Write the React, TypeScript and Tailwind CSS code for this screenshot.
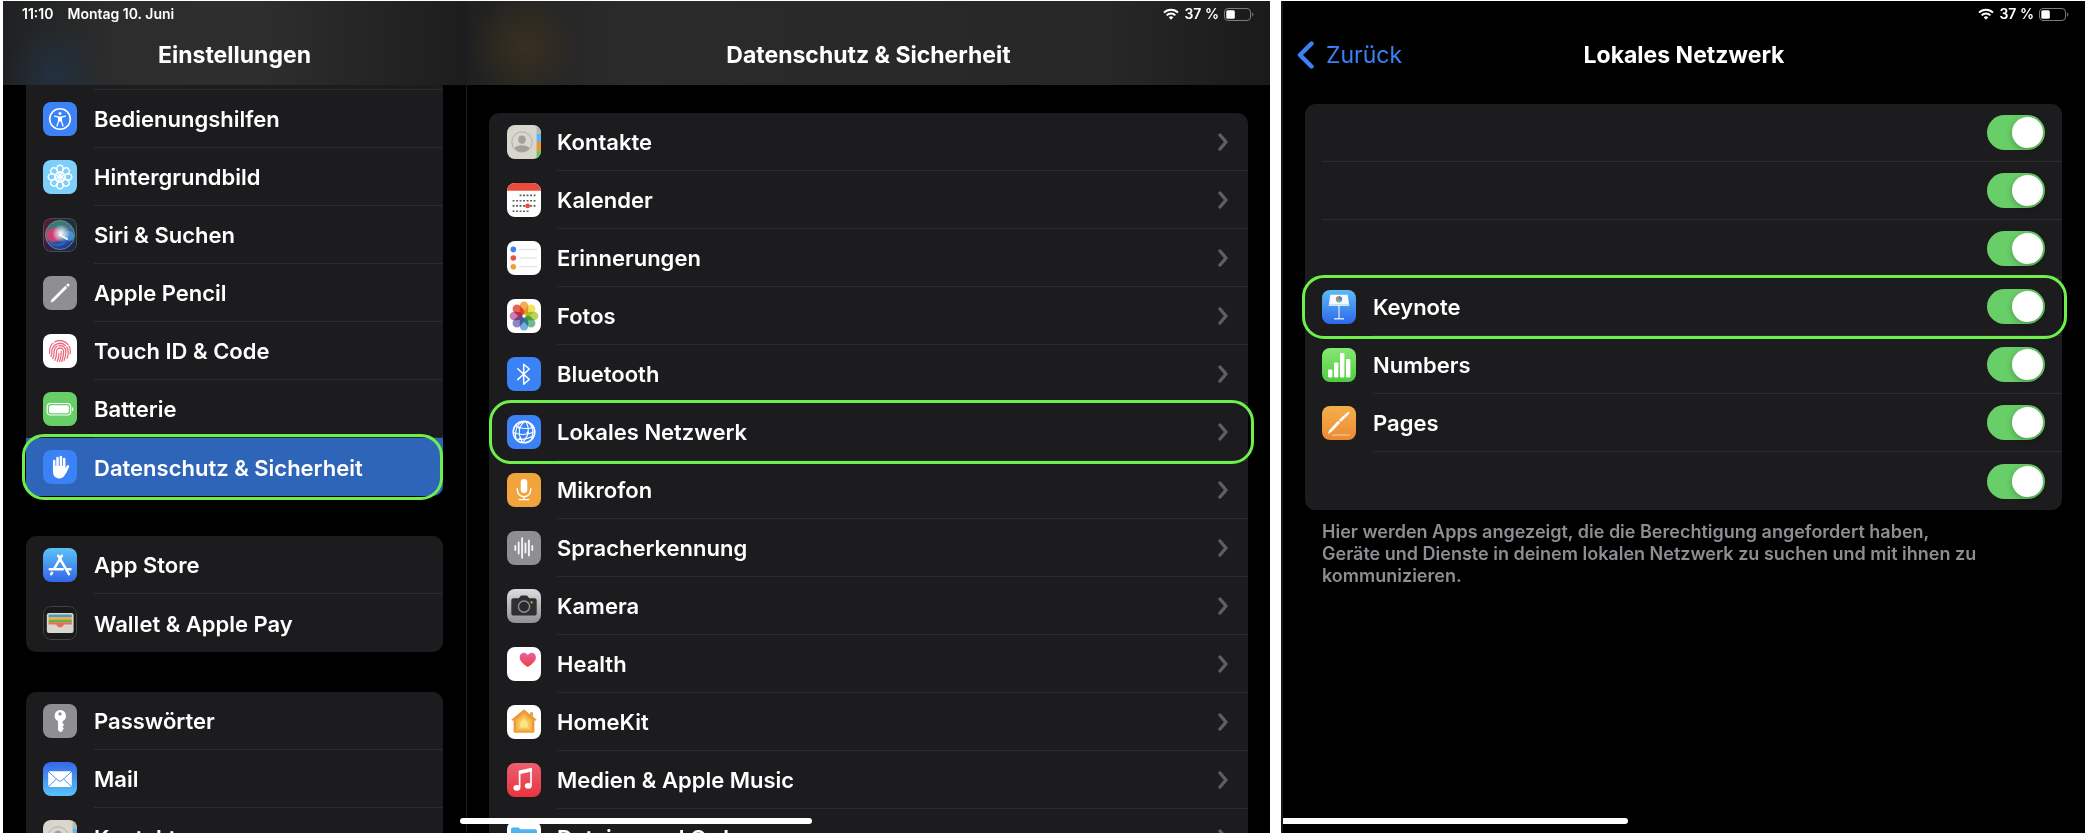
import React from 'react';

type IconName =
  | 'accessibility' | 'wallpaper' | 'siri' | 'pencil' | 'touchid' | 'battery' | 'hand'
  | 'appstore' | 'wallet' | 'key' | 'mail' | 'contacts' | 'calendar' | 'reminders'
  | 'photos' | 'bluetooth' | 'globe' | 'mic' | 'speech' | 'camera' | 'health' | 'home'
  | 'music' | 'files' | 'keynote' | 'numbers' | 'pages';

type Item = { label: string; icon: IconName; active?: boolean };

const sidebarGroups: Item[][] = [
  [
    { label: 'Bedienungshilfen', icon: 'accessibility' },
    { label: 'Hintergrundbild', icon: 'wallpaper' },
    { label: 'Siri & Suchen', icon: 'siri' },
    { label: 'Apple Pencil', icon: 'pencil' },
    { label: 'Touch ID & Code', icon: 'touchid' },
    { label: 'Batterie', icon: 'battery' },
    { label: 'Datenschutz & Sicherheit', icon: 'hand', active: true },
  ],
  [
    { label: 'App Store', icon: 'appstore' },
    { label: 'Wallet & Apple Pay', icon: 'wallet' },
  ],
  [
    { label: 'Passwörter', icon: 'key' },
    { label: 'Mail', icon: 'mail' },
    { label: 'Kontakte', icon: 'contacts' },
  ],
];

const privacyItems: Item[] = [
  { label: 'Kontakte', icon: 'contacts' },
  { label: 'Kalender', icon: 'calendar' },
  { label: 'Erinnerungen', icon: 'reminders' },
  { label: 'Fotos', icon: 'photos' },
  { label: 'Bluetooth', icon: 'bluetooth' },
  { label: 'Lokales Netzwerk', icon: 'globe', active: true },
  { label: 'Mikrofon', icon: 'mic' },
  { label: 'Spracherkennung', icon: 'speech' },
  { label: 'Kamera', icon: 'camera' },
  { label: 'Health', icon: 'health' },
  { label: 'HomeKit', icon: 'home' },
  { label: 'Medien & Apple Music', icon: 'music' },
  { label: 'Dateien und Ordner', icon: 'files' },
];

const networkApps: { label?: string; icon?: IconName; active?: boolean }[] = [
  {},
  {},
  {},
  { label: 'Keynote', icon: 'keynote', active: true },
  { label: 'Numbers', icon: 'numbers' },
  { label: 'Pages', icon: 'pages' },
  {},
];

const petals = ['#f29d38', '#f1e03a', '#a9cf46', '#55b07f', '#5f9fd8', '#7c6fb8', '#c16aa8', '#e5493f'];

const glyphs: Record<IconName, React.ReactNode> = {
  accessibility: (
    <>
      <rect width="34" height="34" fill="#3b82f7" />
      <circle cx="17" cy="17" r="10.3" fill="none" stroke="#fff" strokeWidth="1.6" />
      <circle cx="17" cy="11.6" r="1.5" fill="#fff" />
      <path d="M11.6 14.2l4 .9v4L14 24M22.4 14.2l-4 .9v4L20 24" fill="none" stroke="#fff" strokeWidth="1.3" strokeLinecap="round" strokeLinejoin="round" />
      <path d="M15.2 14.6h3.6v5h-3.6z" fill="#fff" />
    </>
  ),
  wallpaper: (
    <>
      <rect width="34" height="34" fill="#7fcffb" />
      <g fill="none" stroke="#fff" strokeWidth="1.5">
        {petals.map((p, i) => (
          <g key={p} transform={`rotate(${i * 45} 17 17)`}>
            <ellipse cx="17" cy="8.8" rx="3.2" ry="3.6" />
            <ellipse cx="17" cy="14" rx="1.3" ry="2.4" strokeWidth="1" />
          </g>
        ))}
      </g>
    </>
  ),
  siri: (
    <>
      <defs>
        <linearGradient id="siriBg" x1="0" y1="0" x2="1" y2="0">
          <stop offset="0" stopColor="#6a132c" />
          <stop offset=".5" stopColor="#23313a" />
          <stop offset="1" stopColor="#16343f" />
        </linearGradient>
        <linearGradient id="siriOrb" x1="0" y1="0" x2=".3" y2="1">
          <stop offset="0" stopColor="#2f7f63" />
          <stop offset=".5" stopColor="#4b6f8c" />
          <stop offset="1" stopColor="#1d3f96" />
        </linearGradient>
        <radialGradient id="siriGlow">
          <stop offset="0" stopColor="#fff" />
          <stop offset=".35" stopColor="#e6f3f4" stopOpacity=".75" />
          <stop offset="1" stopColor="#fff" stopOpacity="0" />
        </radialGradient>
      </defs>
      <rect width="34" height="34" fill="url(#siriBg)" />
      <path d="M0 24h34v10H0z" fill="#241c52" opacity=".6" />
      <circle cx="17" cy="17" r="14.5" fill="url(#siriOrb)" stroke="#6f9c94" strokeWidth=".8" />
      <circle cx="10.5" cy="17" r="7" fill="#e0386c" opacity=".85" />
      <circle cx="26" cy="18" r="5" fill="#4aa3ea" opacity=".75" />
      <path d="M6 24c8 4 14 2 20-4-3 8-12 12-20 4z" fill="#3c6be0" opacity=".6" />
      <circle cx="18" cy="15.5" r="9" fill="url(#siriGlow)" />
      <path d="M17 17l7 4" stroke="#fff" strokeWidth="2" strokeLinecap="round" opacity=".9" />
      <rect x=".5" y=".5" width="33" height="33" rx="7.5" fill="none" stroke="#4b4b4e" />
    </>
  ),
  pencil: (
    <>
      <rect width="34" height="34" fill="#8e8e93" />
      <path d="M7.4 26.6l1.2-3.2L22.3 9.8l2 2L10.6 25.4z" fill="#fff" />
      <path d="M23.1 9l1-1a1.4 1.4 0 0 1 2 2l-1 1z" fill="#fff" />
    </>
  ),
  touchid: (
    <>
      <defs>
        <clipPath id="fingerClip">
          <circle cx="17" cy="17" r="11.3" />
        </clipPath>
      </defs>
      <rect width="34" height="34" fill="#fff" />
      <g clipPath="url(#fingerClip)" fill="none" stroke="#ec6a80" strokeWidth="1.3" strokeLinecap="round">
        <path d="M6.6 19.5v-2.3a10.4 10.4 0 0 1 3.5-8.1M11.7 7.9a10.4 10.4 0 0 1 13.5 2.8M26.2 12.2c1.3 2.5 1.3 5 1 7.6" />
        <path d="M8 22.4c.8-1.7.9-3.400.9-5a8.100 8.100 0 0 1 13.5-6M23.7 12.9c1.9 3 1.7 7.4.5 11.5" />
        <path d="M9.6 24.7c1.4-2.4 1.6-4.7 1.6-7.3a5.800 5.800 0 0 1 3-5.1M15.9 11.6a5.800 5.800 0 0 1 6.9 5.8c0 3.3-.5 6.2-1.7 9" />
        <path d="M11.7 26.5c1.5-2.9 1.9-5.7 1.9-9a3.500 3.500 0 0 1 7 0c0 3.7-.6 7-2 10.3" />
        <path d="M14.2 27.6c1.3-3 1.7-5.6 1.7-8.1M18.3 17.3c0 3.8-.5 7-1.8 10.4" />
      </g>
    </>
  ),
  battery: (
    <>
      <rect width="34" height="34" fill="#68ce67" />
      <rect x="4.2" y="11.5" width="23.5" height="11.5" rx="3.2" fill="none" stroke="#fff" strokeWidth="1.2" />
      <rect x="6" y="13.3" width="19.9" height="7.9" rx="1.7" fill="#fff" />
      <path d="M29 15.2c1.9.5 1.9 3.6 0 4.1z" fill="#fff" />
    </>
  ),
  hand: (
    <>
      <rect width="34" height="34" rx="8" fill="#3b82f7" />
      <g stroke="#fff" strokeWidth="2.5" strokeLinecap="round" fill="none">
        <path d="M11.2 11v8M14.5 8v11M17.9 7v12M21.2 9v10" />
        <path d="M25 16.3l-2.8 6" />
      </g>
      <path d="M9.95 16h12.5v2.5l2.2-1-1.8 5.5c-1.3 3.6-3.2 5.4-6.4 5.4-4.6 0-6.5-3-6.5-7.4z" fill="#fff" />
    </>
  ),
  appstore: (
    <>
      <defs>
        <linearGradient id="storeBg" x1="0" y1="0" x2="0" y2="1">
          <stop offset="0" stopColor="#5dc1f6" />
          <stop offset="1" stopColor="#3266e9" />
        </linearGradient>
      </defs>
      <rect width="34" height="34" fill="url(#storeBg)" />
      <g stroke="#fff" strokeWidth="2.5" strokeLinecap="round">
        <path d="M15.2 7.7L25.9 26.2M18.9 7.7L11 21.2M9 24.8l-.8 1.4M6.7 21.2h13.1M24.2 21.2h3.3" />
      </g>
    </>
  ),
  wallet: (
    <>
      <rect width="34" height="34" fill="#1a1a1b" />
      <rect x=".5" y=".5" width="33" height="33" rx="7.5" fill="none" stroke="#434345" />
      <rect x="3.8" y="7" width="26.8" height="20" rx="2.2" fill="#d9d6ce" />
      <path d="M5.6 9.6c0-.7.5-1 1-1h21.2c.6 0 1 .3 1 1v2H5.6z" fill="#4f97c6" />
      <path d="M5.6 11.3h23.2v2.8H5.6z" fill="#ecb23e" />
      <path d="M5.6 13.8h23.2v2.8H5.6z" fill="#69b14f" />
      <path d="M5.6 16.3h23.2v2.3h-7.3c-1 0-1.3 3-4.3 3s-3.3-3-4.3-3H5.6z" fill="#e8705b" />
    </>
  ),
  key: (
    <>
      <rect width="34" height="34" fill="#8e8e93" />
      <path
        fillRule="evenodd"
        d="M17 6a5.9 5.9 0 0 1 2.6 11.2v2.1l1.6 1.6-1.8 1.9 1.5 1.7-1.3 1.4v1L17.3 28.3l-2.3-2.1v-9A5.9 5.9 0 0 1 17 6zm0 2.3a1.6 1.6 0 1 0 0 3.2 1.6 1.6 0 0 0 0-3.2z"
        fill="#fff"
      />
    </>
  ),
  mail: (
    <>
      <defs>
        <linearGradient id="mailBg" x1="0" y1="0" x2="0" y2="1">
          <stop offset="0" stopColor="#3568e8" />
          <stop offset="1" stopColor="#5ac2f8" />
        </linearGradient>
      </defs>
      <rect width="34" height="34" fill="url(#mailBg)" />
      <rect x="5.2" y="9.3" width="23.6" height="15.7" rx="2" fill="#fff" />
      <path d="M5.8 10l9.2 8.3c1.2 1.1 2.8 1.1 4 0L28.2 10M5.8 24.3l7.6-7.4M28.2 24.3l-7.6-7.4" fill="none" stroke="#4a93f0" strokeWidth="1" />
    </>
  ),
  contacts: (
    <>
      <rect width="34" height="34" fill="#d9d6cd" />
      <path d="M29.6 0H34v8.7h-4.4z" fill="#b9b7b1" />
      <path d="M29.6 8.7H34v8.3h-4.4z" fill="#5fb5ea" />
      <path d="M29.6 17H34v8.9h-4.4z" fill="#ec9531" />
      <path d="M29.6 25.9H34V34h-4.4z" fill="#61c964" />
      <circle cx="15" cy="17" r="10.2" fill="none" stroke="#aeaaa4" strokeWidth=".9" />
      <ellipse cx="15" cy="14.6" rx="3.7" ry="4.2" fill="#a49f99" />
      <path d="M7.5 23.2c1.7-2.2 4.4-3 7.5-3s5.8.8 7.5 3A9.6 9.6 0 0 1 15 27a9.6 9.6 0 0 1-7.5-3.8z" fill="#a49f99" />
    </>
  ),
  calendar: (
    <>
      <rect width="34" height="34" fill="#fff" />
      <path d="M0 0h34v7.8H0z" fill="#eb4b3d" />
      <g stroke="#5c5c5c" strokeWidth="1.6" strokeDasharray="1.9 1.6">
        <path d="M12.6 12.4h16M5.6 17.7h23M5.6 22.9h23M5.6 28.2h16" />
      </g>
      <circle cx="20.6" cy="22.9" r="2.4" fill="#eb4b3d" />
    </>
  ),
  reminders: (
    <>
      <rect width="34" height="34" fill="#fff" />
      <circle cx="6.3" cy="8.4" r="2.8" fill="#3b82f7" />
      <circle cx="6.3" cy="17" r="2.8" fill="#eb5246" />
      <circle cx="6.3" cy="25.7" r="2.8" fill="#f0a03a" />
      <path d="M12.3 8.4H30M12.3 17H30M12.3 25.7H30" stroke="#dcdcde" strokeWidth="1" />
    </>
  ),
  photos: (
    <>
      <rect width="34" height="34" fill="#fff" />
      {petals.map((color, i) => (
        <rect key={color} x="12.7" y="2.6" width="8.6" height="13" rx="4.3" fill={color} opacity=".85" transform={`rotate(${i * 45} 17 17)`} className="mix-blend-multiply" />
      ))}
    </>
  ),
  bluetooth: (
    <>
      <rect width="34" height="34" fill="#3b82f7" />
      <path d="M10.7 11.8l11.6 10.6-5.6 4.8V7.2l5.6 4.8-11.6 10.6" fill="none" stroke="#fff" strokeWidth="1.5" strokeLinejoin="round" strokeLinecap="round" />
    </>
  ),
  globe: (
    <>
      <rect width="34" height="34" fill="#3b82f7" />
      <g fill="none" stroke="#fff" strokeWidth="1.1">
        <circle cx="17" cy="17" r="10.8" strokeWidth="1.5" />
        <path d="M18.5 6.3c-6.5 3.5-8.5 12-3 21M18.5 6.3c4.5 7 3.5 15-3 21M18.5 6.3C12 7 7.5 12.5 8.8 23.5M18.5 6.3c7 3 9.3 10 5.7 18" />
        <path d="M8.5 10.7c5 3.3 13 3.8 18.2 1.2M6.2 17.6c7 2.6 15.5 2.3 21.6-1.2M9.2 24c5 .8 12 0 17-3.2" />
      </g>
      <g fill="#fff">
        <circle cx="12.3" cy="12.8" r="1.2" />
        <circle cx="20.8" cy="17.8" r="1.4" />
        <circle cx="13.2" cy="23.7" r="1.2" />
      </g>
    </>
  ),
  mic: (
    <>
      <rect width="34" height="34" fill="#f1a33c" />
      <rect x="13.7" y="6" width="6.6" height="14" rx="3.3" fill="#fff" />
      <path d="M10.3 15.5v1.6a6.7 6.7 0 0 0 13.4 0v-1.6M17 23.8v2.8M12.2 26.6h9.6" fill="none" stroke="#fff" strokeWidth="1.4" strokeLinecap="round" />
    </>
  ),
  speech: (
    <>
      <rect width="34" height="34" fill="#8e8e93" />
      <path d="M8.3 15v4M11.7 11.5v11M15.1 7.2v19.6M18.5 12.5v9M21.9 9.5v15M25.3 15v4" stroke="#f2f2f3" strokeWidth="1.9" strokeLinecap="round" />
    </>
  ),
  camera: (
    <>
      <defs>
        <linearGradient id="cameraBg" x1="0" y1="0" x2="0" y2="1">
          <stop offset="0" stopColor="#dddce0" />
          <stop offset="1" stopColor="#908f94" />
        </linearGradient>
      </defs>
      <rect width="34" height="34" fill="url(#cameraBg)" />
      <path d="M6.5 9.3h5.3l1.5-2c.4-.5.8-.7 1.4-.7h4.6c.6 0 1 .2 1.4.7l1.5 2h5.3c1.3 0 2.2.8 2.2 2.2v12.9c0 1.4-.9 2.2-2.2 2.2h-21c-1.3 0-2.2-.8-2.2-2.2V11.5c0-1.4.9-2.2 2.2-2.2z" fill="#303031" />
      <circle cx="17" cy="17.6" r="5.6" fill="#2a2a2b" stroke="#8f8f94" strokeWidth="1.4" />
      <circle cx="24.6" cy="13.3" r="1.1" fill="#e4a93a" />
    </>
  ),
  health: (
    <>
      <defs>
        <linearGradient id="heartFill" x1="0" y1="0" x2="0" y2="1">
          <stop offset="0" stopColor="#ea5fb0" />
          <stop offset="1" stopColor="#ea4335" />
        </linearGradient>
      </defs>
      <rect width="34" height="34" fill="#fff" />
      <path d="M20.8 20.1c-5.5-3.6-8.1-6.6-8.1-9.9 0-2.7 1.8-4.5 4.2-4.5 1.7 0 3.1.9 3.9 2.4.8-1.5 2.2-2.4 3.9-2.4 2.4 0 4.2 1.8 4.2 4.5 0 3.3-2.6 6.3-8.1 9.9z" fill="url(#heartFill)" />
    </>
  ),
  home: (
    <>
      <rect width="34" height="34" fill="#fff" />
      <path d="M17 4.2l6.2 5.2V7.2h2.7v4.4l3.8 3.2-1.3 1-1-.6v11.3c0 .7-.6 1.3-1.3 1.3H7.9c-.7 0-1.3-.6-1.3-1.3V15.2l-1 .6-1.3-1z" fill="#ee9a3a" />
      <path d="M17 8.3l8 6.8v10.6H9V15.1z" fill="#f5b548" />
      <path d="M17 11.2l5.8 5v7.8H11.2v-7.8z" fill="#f7ca59" />
      <path d="M17 14l3.7 3.2v5.2h-7.4v-5.2z" fill="#fbe386" />
    </>
  ),
  music: (
    <>
      <defs>
        <linearGradient id="musicBg" x1="0" y1="0" x2="0" y2="1">
          <stop offset="0" stopColor="#ec5f70" />
          <stop offset="1" stopColor="#e8343f" />
        </linearGradient>
      </defs>
      <rect width="34" height="34" fill="url(#musicBg)" />
      <path d="M11.9 7.5L24.8 4.7v3.8l-12.9 2.8z" fill="#fff" />
      <path d="M12.6 8v16M24 6v16" stroke="#fff" strokeWidth="1.7" fill="none" />
      <ellipse cx="9.9" cy="24.8" rx="3.5" ry="2.9" fill="#fff" />
      <ellipse cx="21.3" cy="22.8" rx="3.5" ry="2.9" fill="#fff" />
    </>
  ),
  files: (
    <>
      <rect width="34" height="34" fill="#fff" />
      <path d="M4 8.5C4 7.2 4.8 6.5 6 6.5h5.5l2 1.8H28c1.2 0 2 .8 2 2V27H4z" fill="#4fb3f2" />
      <path d="M4 12h26v15H4z" fill="#7cc8f7" />
    </>
  ),
  keynote: (
    <>
      <defs>
        <linearGradient id="keynoteBg" x1="0" y1="0" x2="0" y2="1">
          <stop offset="0" stopColor="#5bbcf7" />
          <stop offset="1" stopColor="#2f66ea" />
        </linearGradient>
      </defs>
      <rect width="34" height="34" fill="url(#keynoteBg)" />
      <path d="M8.3 4.8h17.4l1.4 9.7H6.9z" fill="#f4f9ff" />
      <path d="M6.7 14.3h20.6v1.6H6.7z" fill="#d6e9fb" />
      <circle cx="17" cy="9.3" r="3.1" fill="#59b5a4" />
      <path d="M17 9.3V6.2a3.1 3.1 0 0 1 2.9 4.2z" fill="#5a7be0" />
      <path d="M17 9.3V6.2a3.1 3.1 0 0 0-2.9 4.2z" fill="#e9743f" />
      <path d="M16.4 15.9h1.2v12h-1.2z" fill="#e8f2fd" />
      <path d="M12 27.9h10v1.6H12z" fill="#cfe2fb" />
    </>
  ),
  numbers: (
    <>
      <defs>
        <linearGradient id="numbersBg" x1="0" y1="0" x2="0" y2="1">
          <stop offset="0" stopColor="#86e873" />
          <stop offset="1" stopColor="#4fcb3f" />
        </linearGradient>
      </defs>
      <rect width="34" height="34" fill="url(#numbersBg)" />
      <g fill="#fff">
        <rect x="6" y="21.5" width="4.4" height="8" rx="1" />
        <rect x="12" y="14.5" width="4.4" height="15" rx="1" />
        <rect x="18" y="5" width="4.4" height="24.5" rx="1" />
        <rect x="24" y="11" width="4.4" height="18.5" rx="1" />
      </g>
    </>
  ),
  pages: (
    <>
      <defs>
        <linearGradient id="pagesBg" x1="0" y1="0" x2="0" y2="1">
          <stop offset="0" stopColor="#f3b04a" />
          <stop offset="1" stopColor="#ec8a35" />
        </linearGradient>
      </defs>
      <rect width="34" height="34" fill="url(#pagesBg)" />
      <path d="M10 29h18" stroke="#f8cfa0" strokeWidth="1" />
      <path d="M5.8 28.2l1.6-4.3L16 14.8l2.2 2-8.6 9z" fill="#fff" />
      <path d="M16.7 14.1L25.5 6.2c1.4-1.1 2.6 0 1.6 1.5l-8.2 8.4z" fill="#fff" />
    </>
  ),
};

const AppIcon = ({ name }: { name: IconName }) => (
  <svg viewBox="0 0 34 34" className="size-[34px] shrink-0 rounded-lg" aria-hidden="true">
    {glyphs[name]}
  </svg>
);

const StatusIcons = () => (
  <div className="flex items-center gap-[5px]">
    <svg viewBox="0 0 16 12" className="h-3 w-4" aria-hidden="true">
      <path d="M1 4.6a10 10 0 0 1 14 0M3.6 7.3a6.2 6.2 0 0 1 8.8 0" fill="none" stroke="#fff" strokeWidth="1.9" />
      <path d="M8 11.7L5.7 9.3a3.3 3.3 0 0 1 4.6 0z" fill="#fff" />
    </svg>
    <span>37 %</span>
    <svg viewBox="0 0 30 13" className="h-[13px] w-[30px]" aria-hidden="true">
      <rect x=".5" y=".5" width="26" height="12" rx="3.5" fill="none" stroke="#7d7d7d" />
      <rect x="2.3" y="2.2" width="8.5" height="8.6" rx="1.5" fill="#fff" />
      <path d="M28.2 4.5c1.6.4 1.6 3.6 0 4z" fill="#7d7d7d" />
    </svg>
  </div>
);

const Chevron = () => (
  <svg viewBox="0 0 10 18" className="h-[18px] w-[10px] shrink-0" aria-hidden="true">
    <path d="M2 2l6 7-6 7" fill="none" stroke="#5f5f63" strokeWidth="3.4" strokeLinecap="round" strokeLinejoin="round" />
  </svg>
);

const SidebarRow = ({ item, last }: { item: Item; last: boolean }) => (
  <li className="relative">
    <a href="#" className={`flex h-[58px] items-center gap-[17px] pl-[17px] ${item.active ? 'rounded-b-[10px] bg-[#2f65b9]' : ''}`}>
      <AppIcon name={item.icon} />
      <span className={`flex h-full flex-1 items-center pt-0.5 ${last || item.active ? '' : 'border-b border-[#2c2c2e]'}`}>{item.label}</span>
    </a>
    {item.active && (
      <div className="pointer-events-none absolute -inset-y-1 -left-1 right-0 rounded-[22px] border-[3px] border-[#6ef04a]" />
    )}
  </li>
);

const Sidebar = () => (
  <aside className="flex w-[464px] shrink-0 flex-col border-r border-[#1c1c1e]">
    <header className="h-[84px] shrink-0 bg-[radial-gradient(circle_at_52px_72px,#22303f_0,transparent_50px),linear-gradient(to_right,#1f2122,#2d2d2d_25%,#2e2e2e_55%,#1d1d1d)]">
      <div className="flex h-7 items-center gap-3.5 pb-0.5 pl-[19px] text-sm">
        <span>11:10</span>
        <span>Montag 10. Juni</span>
      </div>
      <h1 className="flex h-[52px] items-center justify-center text-[23px] font-bold">Einstellungen</h1>
    </header>
    <nav className="flex min-h-0 flex-1 flex-col gap-10 overflow-hidden px-[23px]">
      {sidebarGroups.map((group, i) => (
        <ul key={i} className={`shrink-0 bg-[#1c1c1e] ${i === 0 ? 'rounded-b-[10px]' : 'rounded-[10px]'}`}>
          {i === 0 && <li className="ml-[68px] h-[5px] border-b border-[#2c2c2e]" />}
          {group.map((item, j) => (
            <SidebarRow key={item.label} item={item} last={j === group.length - 1} />
          ))}
        </ul>
      ))}
    </nav>
  </aside>
);

const PrivacyPane = () => (
  <section className="flex min-w-0 flex-1 flex-col">
    <header className="h-[84px] shrink-0 bg-[radial-gradient(circle_at_58px_46px,#38301f_0,transparent_56px),linear-gradient(to_right,#1f201f,#2b2b2c_20%,#272727_80%,#1a1a1a)]">
      <div className="flex h-7 items-center justify-end pb-0.5 pr-4 text-sm">
        <StatusIcons />
      </div>
      <h2 className="flex h-[52px] items-center justify-center text-[23px] font-bold">Datenschutz &amp; Sicherheit</h2>
    </header>
    <div className="min-h-0 flex-1 overflow-hidden px-[22px] pt-7">
      <ul className="rounded-t-[10px] bg-[#1c1c1e]">
        {privacyItems.map((item) => (
          <li key={item.label} className="relative">
            <a href="#" className="flex h-[58px] items-center gap-4 pl-[18px]">
              <AppIcon name={item.icon} />
              <span className="flex h-full flex-1 items-center justify-between border-b border-[#2c2c2e] pr-5">
                <span className="pt-0.5">{item.label}</span>
                <Chevron />
              </span>
            </a>
            {item.active && (
              <div className="pointer-events-none absolute -inset-y-[3px] -right-1.5 left-0 rounded-[22px] border-[3px] border-[#6ef04a]" />
            )}
          </li>
        ))}
      </ul>
    </div>
  </section>
);

const NetworkPane = () => (
  <section className="relative flex min-w-0 flex-col overflow-hidden border-l-2 border-[#16181a] bg-black">
    <header className="h-[84px] shrink-0">
      <div className="flex h-7 items-center justify-end pb-0.5 pr-4 text-sm">
        <StatusIcons />
      </div>
      <div className="grid h-[52px] grid-cols-[1fr_auto_1fr] items-center">
        <button type="button" className="flex items-center gap-3 justify-self-start pl-3.5 text-[23px] font-normal text-[#3b82f7]">
          <svg viewBox="0 0 17 28" className="h-7 w-[17px]" aria-hidden="true">
            <path d="M14.5 2.5L3 14l11.5 11.5" fill="none" stroke="currentColor" strokeWidth="4.4" strokeLinecap="round" strokeLinejoin="round" />
          </svg>
          Zurück
        </button>
        <h2 className="text-[23px] font-bold">Lokales Netzwerk</h2>
      </div>
    </header>
    <div className="pl-[22px] pr-[23px] pt-[19px]">
      <ul className="rounded-[10px] bg-[#1c1c1e]">
        {networkApps.map((app, i) => (
          <li key={i} className="relative">
            <label className="flex h-[58px] items-center gap-[17px] pl-[17px]">
              {app.icon && <AppIcon name={app.icon} />}
              <span className={`flex h-full flex-1 items-center justify-between pr-[17px] ${i < networkApps.length - 1 ? 'border-b border-[#2c2c2e]' : ''}`}>
                <span className="pt-0.5">{app.label}</span>
                <input
                  type="checkbox"
                  role="switch"
                  defaultChecked
                  aria-label={app.label ?? `App ${i + 1}`}
                  className="h-[35px] w-[58px] appearance-none rounded-full bg-[#636366] p-0.5 before:block before:size-[31px] before:rounded-full before:bg-white before:shadow-[0_2px_6px_rgba(0,0,0,0.25)] checked:bg-[#68ce67] checked:before:ml-[23px]"
                />
              </span>
            </label>
            {app.active && (
              <div className="pointer-events-none absolute -inset-y-[3px] -left-[3px] -right-[5px] rounded-[22px] border-[3px] border-[#6ef04a]" />
            )}
          </li>
        ))}
      </ul>
      <p className="pl-[17px] pt-[11px] text-lg leading-[22px] text-[#8d8d92]">
        Hier werden Apps angezeigt, die die Berechtigung angefordert haben,
        <br />
        Geräte und Dienste in deinem lokalen Netzwerk zu suchen und mit ihnen zu
        <br />
        kommunizieren.
      </p>
    </div>
    <div className="absolute bottom-[9px] left-0 h-1.5 w-[345px] rounded-r-full bg-white" />
  </section>
);

export default function App() {
  return (
    <main className="grid h-screen grid-cols-[1267fr_804fr] gap-[11px] overflow-hidden bg-white py-px pl-[3px] pr-px font-[Inter,sans-serif] text-[22px] font-semibold text-white">
      <div className="relative flex min-w-0 overflow-hidden bg-black">
        <Sidebar />
        <PrivacyPane />
        <div className="absolute bottom-[9px] left-[457px] h-1.5 w-[352px] rounded-full bg-white" />
      </div>
      <NetworkPane />
    </main>
  );
}
